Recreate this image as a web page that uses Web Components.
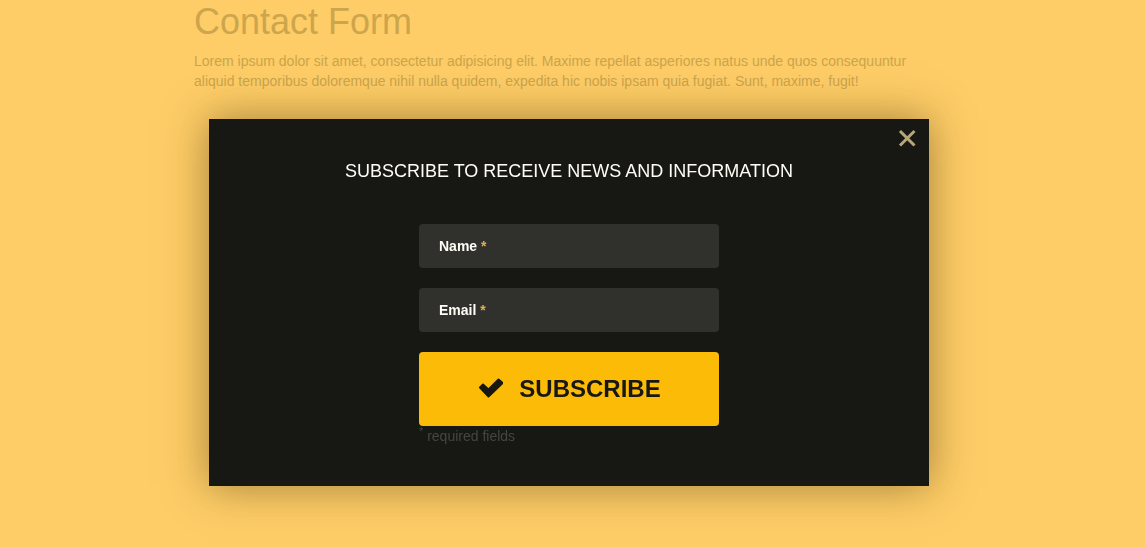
<!DOCTYPE html>
<html lang="en">
<head>
<meta charset="utf-8">
<title>Contact Form</title>
<style>
  html { background: #fecd67; }
  body { margin: 0; font: 14px/20px "Liberation Sans", Arial, sans-serif; }
</style>
</head>
<body>
<page-intro>
  <span slot="title">Contact Form</span>
  Lorem ipsum dolor sit amet, consectetur adipisicing elit. Maxime repellat asperiores natus unde quos consequuntur aliquid temporibus doloremque nihil nulla quidem, expedita hic nobis ipsam quia fugiat. Sunt, maxime, fugit!
</page-intro>
<modal-dialog>
  <span slot="title">SUBSCRIBE TO RECEIVE NEWS AND INFORMATION</span>
  <subscribe-form></subscribe-form>
</modal-dialog>

<script>
const define = (name, html) => customElements.define(name, class extends HTMLElement {
  constructor() {
    super();
    this.attachShadow({ mode: "open" }).innerHTML = html;
    const label = this.getAttribute("label");
    if (label) {
      this.shadowRoot.querySelector(".text").textContent = label;
      this.shadowRoot.querySelector("input").type = this.getAttribute("type") || "text";
    }
  }
});

define("page-intro", `
  <style>
    :host { display: block; padding: 2px 22px 0 15px; color: #cca54c; }
    .container { max-width: 750px; margin: 0 auto; }
    h1 { margin: 0 0 9px; font-size: 36px; line-height: 40px; font-weight: 400; }
    p { margin: 0; }
  </style>
  <main class="container">
    <h1><slot name="title"></slot></h1>
    <p><slot></slot></p>
  </main>`);

define("modal-dialog", `
  <style>
    :host { position: fixed; inset: 0; overflow: auto; box-sizing: border-box; padding: 119px 22px 40px 15px; }
    section { position: relative; box-sizing: border-box; max-width: 720px; margin: 0 auto; padding: 40px 20px;
      background: #171813; box-shadow: 0 0 40px rgba(70, 50, 10, .5); }
    h2 { margin: 0 0 41px; font-size: 18px; line-height: 24px; font-weight: 400; text-align: center; color: #fffdf5; }
    button { position: absolute; top: 8px; right: 10px; width: 24px; height: 24px; padding: 0; border: 0;
      background: none; color: #b9a678; cursor: pointer; }
    svg { display: block; }
  </style>
  <section role="dialog" aria-labelledby="title">
    <button type="button" aria-label="Close">
      <svg width="24" height="24" viewBox="0 0 24 24" fill="none" stroke="currentColor" stroke-width="3"><path d="M5 4 19.500 18.500M19.500 4 5 18.500"/></svg>
    </button>
    <h2 id="title"><slot name="title"></slot></h2>
    <slot></slot>
  </section>`);

define("form-field", `
  <style>
    :host { display: grid; height: 44px; }
    input, label { grid-area: 1 / 1; }
    input { min-width: 0; margin: 0; padding: 0 20px; border: 0; border-radius: 4px; background: #30312d;
      color: #fff; font: inherit; outline-color: #fcbb06; }
    label { align-self: center; padding: 0 20px; font-weight: 700; color: #fffdf5; pointer-events: none; }
    i { font-style: normal; color: #dfb14f; }
    input:not(:placeholder-shown) + label { visibility: hidden; }
  </style>
  <input id="field" placeholder=" " required>
  <label for="field"><span class="text"></span> <i>*</i></label>`);

define("subscribe-form", `
  <style>
    :host { display: block; }
    form { display: grid; gap: 20px; max-width: 300px; margin: 0 auto; }
    button { display: flex; align-items: center; justify-content: center; gap: 16px; width: 100%; height: 74px;
      padding: 0; border: 0; border-radius: 4px; background: #fcbb06; color: #171813;
      font: 700 24px/28px "Liberation Sans", Arial, sans-serif; cursor: pointer; }
    small { display: block; font-size: 14px; line-height: 20px; color: #454640; }
    sup { font-size: 11px; line-height: 0; }
  </style>
  <form>
    <form-field label="Name"></form-field>
    <form-field label="Email" type="email"></form-field>
    <div>
      <button type="submit">
        <svg width="26" height="22" viewBox="0 0 26 22" fill="currentColor"><path d="M3 9.500 6 6.500 11.500 11.500 21.500 1.500 25.500 5 11.500 18.500Z" stroke="currentColor" stroke-width="2" stroke-linejoin="round"/></svg>
        <span>SUBSCRIBE</span>
      </button>
      <small><sup>*</sup> required fields</small>
    </div>
  </form>`);
</script>
</body>
</html>
